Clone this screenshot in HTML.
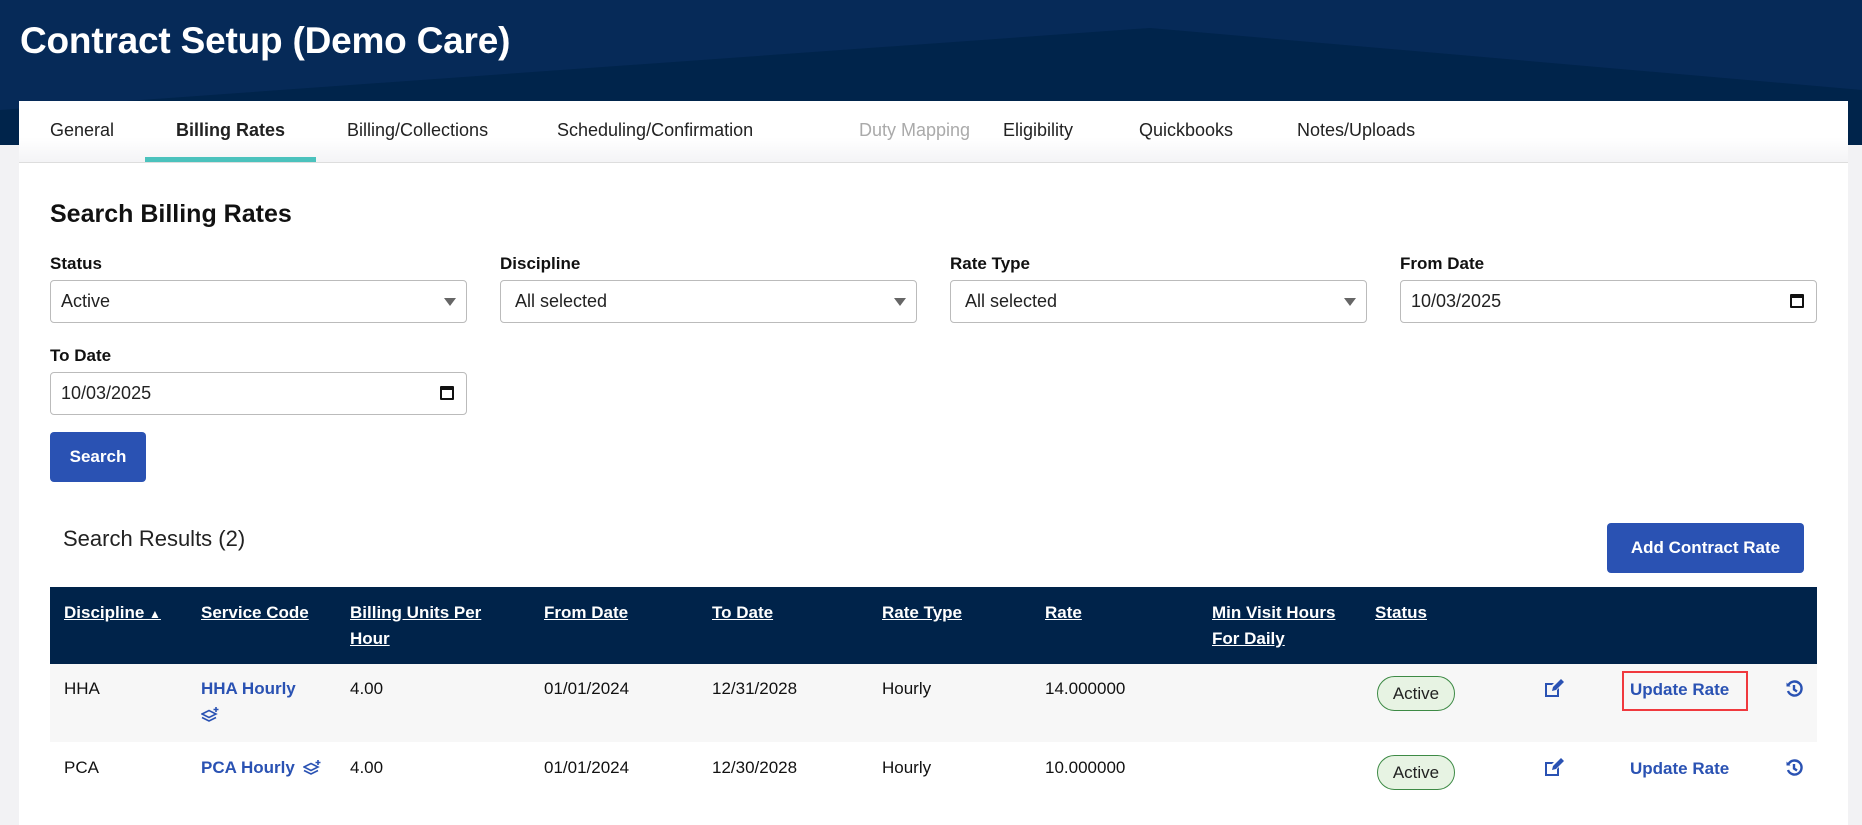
<!DOCTYPE html>
<html><head><meta charset="utf-8"><style>
*{box-sizing:border-box;margin:0;padding:0}
body{width:1862px;height:825px;overflow:hidden;background:#f2f2f4;font-family:"Liberation Sans",Arial,sans-serif;color:#111;position:relative}
.abs{position:absolute}
.hdr{left:0;top:0;width:1862px;height:145px;background:#062a58;overflow:hidden}
.title{left:20px;top:20px;font-size:37px;font-weight:bold;color:#fff;letter-spacing:-0.2px}
.card{left:19px;top:101px;width:1829px;height:724px;background:#fff}
.tabs{left:19px;top:101px;width:1829px;height:62px;background:linear-gradient(#fff 60%,#f4f4f6);border-bottom:1px solid #ddd}
.tab{top:120px;font-size:18px;color:#222;white-space:nowrap}
.lbl{font-size:17px;font-weight:bold;color:#111}
.inp{height:43px;border:1px solid #bbb;border-radius:4px;background:#fff;font-size:18px;padding-left:10px;line-height:41px;color:#222}
.arrow{position:absolute;right:10px;top:17px;width:0;height:0;border-left:6px solid transparent;border-right:6px solid transparent;border-top:8px solid #666}
.cal{position:absolute;right:12px;top:13px;width:14px;height:14px;border:2px solid #111;border-top-width:4px;border-radius:1px}
.btn{background:#2a52b3;color:#fff;font-weight:bold;font-size:17px;border-radius:4px;text-align:center}
.th{top:600px;font-size:17px;font-weight:bold;color:#fff;text-decoration:underline;line-height:26px}
.td{font-size:17px;color:#111}
.lnk{font-size:17px;font-weight:bold;color:#2a52b3}
.badge{width:78px;height:35px;border:1px solid #3d8a45;border-radius:18px;background:#e7f3e3;font-size:17px;text-align:center;line-height:33px;color:#222}
</style></head><body>
<div class="abs hdr">
<svg width="1862" height="145" style="position:absolute;left:0;top:0"><polygon points="0,110 1150,28 1862,90 1862,145 0,145" fill="#00244b"/></svg>
</div>
<div class="abs title">Contract Setup (Demo Care)</div>
<div class="abs card"></div>
<div class="abs tabs"></div>
<div class="abs tab" style="left:50px">General</div>
<div class="abs tab" style="left:176px;font-weight:bold">Billing Rates</div>
<div class="abs" style="left:145px;top:157px;width:171px;height:5px;background:#4bc2bd"></div>
<div class="abs tab" style="left:347px">Billing/Collections</div>
<div class="abs tab" style="left:557px">Scheduling/Confirmation</div>
<div class="abs tab" style="left:859px;color:#aaa">Duty Mapping</div>
<div class="abs tab" style="left:1003px">Eligibility</div>
<div class="abs tab" style="left:1139px">Quickbooks</div>
<div class="abs tab" style="left:1297px">Notes/Uploads</div>

<div class="abs" style="left:50px;top:200px;font-size:25px;font-weight:bold">Search Billing Rates</div>

<div class="abs lbl" style="left:50px;top:254px">Status</div>
<div class="abs lbl" style="left:500px;top:254px">Discipline</div>
<div class="abs lbl" style="left:950px;top:254px">Rate Type</div>
<div class="abs lbl" style="left:1400px;top:254px">From Date</div>
<div class="abs inp" style="left:50px;top:280px;width:417px">Active<span class="arrow"></span></div>
<div class="abs inp" style="left:500px;top:280px;width:417px;padding-left:14px">All selected<span class="arrow"></span></div>
<div class="abs inp" style="left:950px;top:280px;width:417px;padding-left:14px">All selected<span class="arrow"></span></div>
<div class="abs inp" style="left:1400px;top:280px;width:417px">10/03/2025<span class="cal"></span></div>
<div class="abs lbl" style="left:50px;top:346px">To Date</div>
<div class="abs inp" style="left:50px;top:372px;width:417px">10/03/2025<span class="cal"></span></div>
<div class="abs btn" style="left:50px;top:432px;width:96px;height:50px;line-height:50px">Search</div>

<div class="abs" style="left:63px;top:526px;font-size:22px;color:#222">Search Results (2)</div>
<div class="abs btn" style="left:1607px;top:523px;width:197px;height:50px;line-height:50px">Add Contract Rate</div>

<div class="abs" style="left:50px;top:587px;width:1767px;height:77px;background:#00234a"></div>
<div class="abs th" style="left:64px">Discipline <span style="text-decoration:none;font-size:12px">▲</span></div>
<div class="abs th" style="left:201px">Service Code</div>
<div class="abs th" style="left:350px">Billing Units Per<br>Hour</div>
<div class="abs th" style="left:544px">From Date</div>
<div class="abs th" style="left:712px">To Date</div>
<div class="abs th" style="left:882px">Rate Type</div>
<div class="abs th" style="left:1045px">Rate</div>
<div class="abs th" style="left:1212px">Min Visit Hours<br>For Daily</div>
<div class="abs th" style="left:1375px">Status</div>

<div class="abs" style="left:50px;top:664px;width:1767px;height:78px;background:#f7f7f7"></div>

<div class="abs td" style="left:64px;top:679px">HHA</div>
<div class="abs lnk" style="left:201px;top:679px">HHA Hourly</div>
<svg class="abs" style="left:201px;top:707px" width="18" height="16" viewBox="0 0 18 16" fill="none" stroke="#2a52b3" stroke-width="1.6"><path d="M1 7l7-3.5 7 3.5-7 3.5z"/><path d="M1 10.5l7 3.5 7-3.5"/><path d="M15 0v5M12.5 2.5h5"/></svg>
<div class="abs td" style="left:350px;top:679px">4.00</div>
<div class="abs td" style="left:544px;top:679px">01/01/2024</div>
<div class="abs td" style="left:712px;top:679px">12/31/2028</div>
<div class="abs td" style="left:882px;top:679px">Hourly</div>
<div class="abs td" style="left:1045px;top:679px">14.000000</div>
<div class="abs badge" style="left:1377px;top:676px">Active</div>

<div class="abs td" style="left:64px;top:758px">PCA</div>
<div class="abs lnk" style="left:201px;top:758px">PCA Hourly</div>
<svg class="abs" style="left:303px;top:760px" width="18" height="16" viewBox="0 0 18 16" fill="none" stroke="#2a52b3" stroke-width="1.6"><path d="M1 7l7-3.5 7 3.5-7 3.5z"/><path d="M1 10.5l7 3.5 7-3.5"/><path d="M15 0v5M12.5 2.5h5"/></svg>
<div class="abs td" style="left:350px;top:758px">4.00</div>
<div class="abs td" style="left:544px;top:758px">01/01/2024</div>
<div class="abs td" style="left:712px;top:758px">12/30/2028</div>
<div class="abs td" style="left:882px;top:758px">Hourly</div>
<div class="abs td" style="left:1045px;top:758px">10.000000</div>
<div class="abs badge" style="left:1377px;top:755px">Active</div>

<svg class="abs" style="left:1543px;top:679px" width="22" height="20" viewBox="0 0 22 20"><path d="M2 4h9l-2 2H4v10h10v-5l2-2v9H2z" fill="#2a52b3"/><path d="M9 12l1-4 8-8 3 3-8 8z" fill="#2a52b3"/></svg>
<svg class="abs" style="left:1543px;top:758px" width="22" height="20" viewBox="0 0 22 20"><path d="M2 4h9l-2 2H4v10h10v-5l2-2v9H2z" fill="#2a52b3"/><path d="M9 12l1-4 8-8 3 3-8 8z" fill="#2a52b3"/></svg>

<div class="abs" style="left:1622px;top:671px;width:126px;height:40px;border:2px solid #f0393e"></div>
<div class="abs lnk" style="left:1630px;top:680px">Update Rate</div>
<div class="abs lnk" style="left:1630px;top:759px">Update Rate</div>

<svg class="abs" style="left:1785px;top:680px" width="18" height="18" viewBox="0 0 18 18" fill="none" stroke="#2a52b3" stroke-width="2.4"><path d="M3.5 5A7 7 0 1 1 3 11"/><path d="M9 5v4.5l3 2"/><path d="M1.5 2.5l0 4h4z" fill="#2a52b3" stroke-width="0"/></svg>
<svg class="abs" style="left:1785px;top:759px" width="18" height="18" viewBox="0 0 18 18" fill="none" stroke="#2a52b3" stroke-width="2.4"><path d="M3.5 5A7 7 0 1 1 3 11"/><path d="M9 5v4.5l3 2"/><path d="M1.5 2.5l0 4h4z" fill="#2a52b3" stroke-width="0"/></svg>
</body></html>
